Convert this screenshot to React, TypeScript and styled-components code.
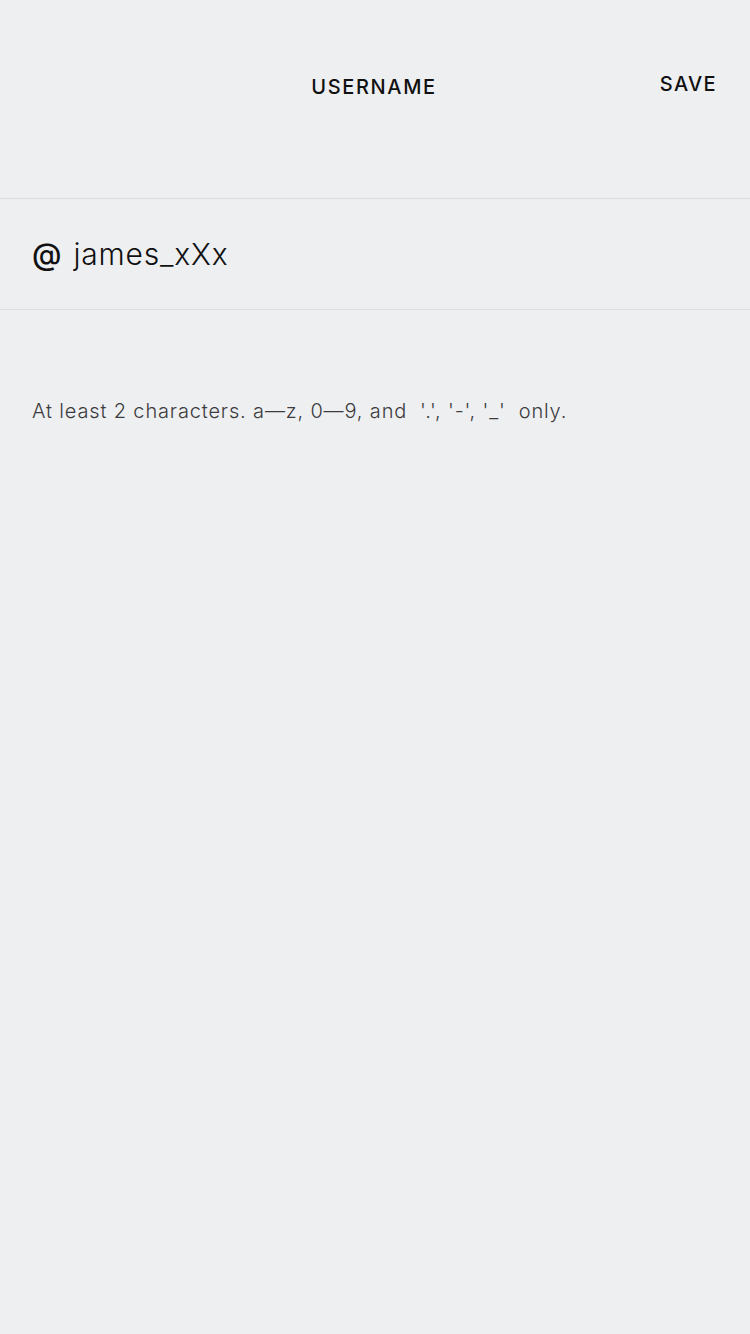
import React, { useState } from 'react'
import styled, { createGlobalStyle } from 'styled-components'

const GlobalStyle = createGlobalStyle`
  html, body {
    margin: 0;
    padding: 0;
    background: #eeeff1;
  }
  body {
    font-family: Inter, 'Noto Sans', 'Liberation Sans', sans-serif;
    -webkit-font-smoothing: antialiased;
  }
`

const Screen = styled.div`
  min-height: 1334px;
  background: #eeeff1;
  display: flex;
  flex-direction: column;
`

const Header = styled.header`
  height: 198px;
  display: grid;
  grid-template-columns: 1fr auto 1fr;
  align-items: start;
  padding: 0 34px 0 32px;
  box-sizing: border-box;
`

const Title = styled.h1`
  grid-column: 2;
  margin: 75px 0 0;
  font-size: 20px;
  font-weight: 500;
  letter-spacing: 1.65px;
  color: #111;
`

const SaveButton = styled.button`
  grid-column: 3;
  justify-self: end;
  margin-top: 72px;
  margin-right: -1px;
  padding: 0;
  border: none;
  background: none;
  font-family: inherit;
  font-size: 20px;
  font-weight: 500;
  letter-spacing: 1.35px;
  color: #111;
  cursor: pointer;
`

const InputRow = styled.label`
  height: 110px;
  display: flex;
  align-items: center;
  gap: 12px;
  padding: 0 32px;
  border-top: 1px solid #dcdde0;
  border-bottom: 1px solid #dcdde0;
`

const At = styled.span`
  font-size: 30px;
  font-weight: 500;
  color: #111;
`

const Field = styled.input`
  flex: 1;
  border: none;
  outline: none;
  background: transparent;
  padding: 0;
  font-family: inherit;
  font-size: 30px;
  font-weight: 300;
  letter-spacing: 0.8px;
  color: #111;
`

const Hint = styled.p`
  margin: 89px 0 0;
  padding: 0 32px;
  font-size: 20px;
  font-weight: 300;
  letter-spacing: 0.85px;
  color: #3c3c3e;
  white-space: pre;
`

const App: React.FC = () => {
  const [name, setName] = useState('james_xXx')

  return (
    <Screen>
      <GlobalStyle />
      <Header>
        <Title>USERNAME</Title>
        <SaveButton>SAVE</SaveButton>
      </Header>
      <InputRow>
        <At>@</At>
        <Field value={name} onChange={e => setName(e.target.value)} />
      </InputRow>
      <Hint>{"At least 2 characters. a\u2014z, 0\u20149, and  '.', '-', '_'  only."}</Hint>
    </Screen>
  )
}

export default App
